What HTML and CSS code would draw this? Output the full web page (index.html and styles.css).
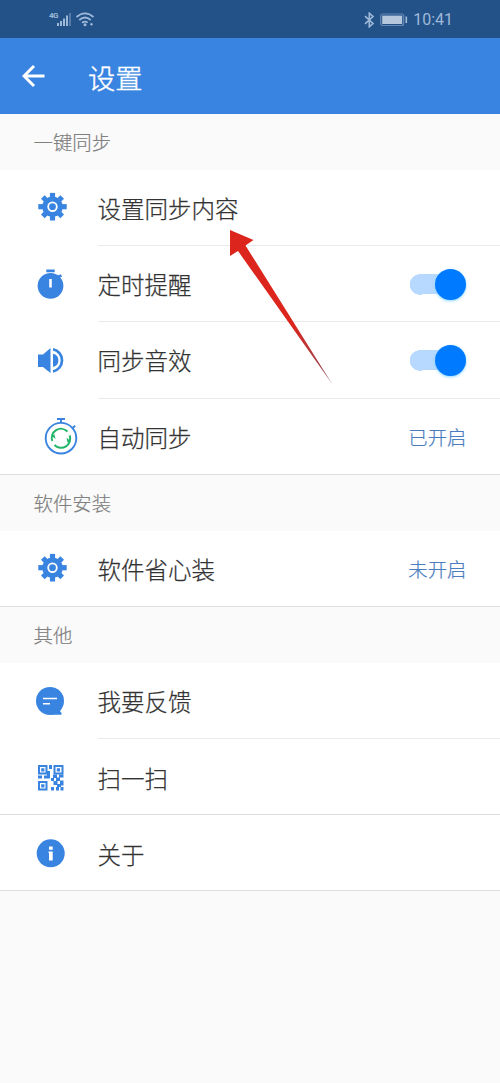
FILE: index.html
```html
<!DOCTYPE html>
<html lang="zh-CN">
<head>
<meta charset="utf-8">
<title>设置</title>
<link rel="stylesheet" href="styles.css">
</head>
<body>
<svg class="defs" width="0" height="0">
  <symbol id="gear" viewBox="0 0 98 76">
    <g fill="#3984e0">
      <circle cx="52.5" cy="36.7" r="10.3"/>
      <rect x="49.9" y="22.9" width="5.2" height="27.6"/><rect x="38.3" y="34.1" width="28.4" height="5.2"/>
      <g transform="rotate(45 52.5 36.7)"><rect x="49.9" y="23" width="5.2" height="27.4"/><rect x="38.8" y="34.1" width="27.4" height="5.2"/></g>
    </g>
    <circle cx="52.5" cy="36.7" r="4.3" fill="none" stroke="#fff" stroke-width="1.8"/>
  </symbol>
</svg>
<main class="screen">
  <div class="status">
    <svg class="signal" width="50" height="20" viewBox="0 0 50 20">
      <text x="1" y="8" class="net">4G</text>
      <g fill="#9fb9d8"><rect x="9" y="13" width="2" height="3"/><rect x="12" y="11" width="2" height="5"/><rect x="15" y="8.5" width="2" height="7.5"/><rect x="18" y="5.5" width="2" height="10.5"/><rect x="21" y="3" width="2" height="13" opacity=".4"/></g>
      <g fill="none" stroke="#9fb9d8" stroke-width="1.7"><path d="M28.5 7Q37 -.4 45.5 7M31.3 10Q37 5 42.7 10M34 12.7Q37 10.5 39.7 12.7"/></g>
      <circle cx="37" cy="14.7" r="1.5" fill="#9fb9d8"/><circle cx="43.5" cy="14.3" r="1.2" fill="#9fb9d8"/>
    </svg>
    <div class="status-right">
      <svg width="11" height="16" viewBox="0 0 11 16"><path d="M1 4.2L9 11.5L5.3 14.8V1.2L9 4.5L1 11.8" fill="none" stroke="#9fb9d8" stroke-width="1.6"/></svg>
      <svg class="battery" width="28" height="14" viewBox="0 0 28 14"><rect x=".7" y="1" width="23" height="11.5" rx="2" fill="none" stroke="#6588b3" stroke-width="1.2"/><rect x="2.2" y="2.6" width="20" height="8.4" fill="#b4c7dd"/><rect x="25.5" y="3.5" width="1.6" height="6.5" fill="#9fb9d8"/></svg>
      <span class="clock">10:41</span>
    </div>
  </div>
  <header class="bar">
    <svg width="24" height="24" viewBox="0 0 24 24"><path d="M22.5 12H2.5M12 2L2 12L12 22" fill="none" stroke="#fff" stroke-width="3"/></svg>
    <h1>设置</h1>
  </header>

  <h2>一键同步</h2>
  <section>
    <div class="row"><svg class="icon" viewBox="0 0 98 76"><use href="#gear"/></svg><div class="cell"><span>设置同步内容</span></div></div>
    <div class="row"><svg class="icon" viewBox="0 0 98 76"><circle cx="50.5" cy="39.8" r="12.9" fill="#3984e0"/><path d="M46.3 24.8H54.7M57.5 31L61.5 29.5" stroke="#3984e0" stroke-width="2.8"/><path d="M50.5 33V41.5" stroke="#fff" stroke-width="2.6"/></svg><div class="cell"><span>定时提醒</span><i class="switch"></i></div></div>
    <div class="row"><svg class="icon" viewBox="0 0 98 76"><path d="M38 32.5H43L50.5 26V51L43 45H38Z" fill="#3984e0"/><path d="M53 31.7A6.8 6.8 0 0 1 53 45Z" fill="#3984e0"/><path d="M53 27.2A11.4 11.4 0 0 1 53 49.5" fill="none" stroke="#3984e0" stroke-width="2.7"/></svg><div class="cell"><span>同步音效</span><i class="switch"></i></div></div>
    <div class="row last"><svg class="icon" viewBox="0 0 98 76"><g fill="none" stroke="#3984e0" stroke-width="1.9"><circle cx="61" cy="39.2" r="15.3"/><path d="M57 20H65M61 20V24M72 29.5L75.2 26.8"/></g><g fill="none" stroke="#20b568" stroke-width="2"><path d="M52.3 42A9.2 9.2 0 0 1 67.500 32.500M69.700 36.400A9.2 9.2 0 0 1 54.500 46"/></g><path d="M51.3 36.500L54.500 35.500L55.500 40ZM70.7 42.500L67.500 43.500L66.500 38.500Z" fill="#20b568"/></svg><div class="cell"><span>自动同步</span><em>已开启</em></div></div>
  </section>

  <h2>软件安装</h2>
  <section>
    <div class="row last"><svg class="icon" viewBox="0 0 98 76"><use href="#gear"/></svg><div class="cell"><span>软件省心装</span><em>未开启</em></div></div>
  </section>

  <h2>其他</h2>
  <section>
    <div class="row"><svg class="icon" viewBox="0 0 98 76"><circle cx="50" cy="38" r="14" fill="#3984e0"/><path d="M52 51.8H61.5V50L57 44Z" fill="#3984e0"/><path d="M43 35.5H57M43 40.7H50" stroke="#fff" stroke-width="1.6"/></svg><div class="cell"><span>我要反馈</span></div></div>
    <div class="row last"><svg class="icon" viewBox="0 0 98 76"><g fill="none" stroke="#3984e0" stroke-width="2"><rect x="39" y="27" width="7.5" height="7.5"/><rect x="54.5" y="27" width="8" height="7.5"/><rect x="39" y="43" width="7.5" height="7.500"/></g><g fill="#3984e0"><path d="M41.2 29.2h3.2v3.2h-3.2zM56.8 29.2h3.2v3.2h-3.2zM41.2 45.2h3.2v3.2h-3.2zM49 26h3v4h-3zM47 32h3v6h-3zM38 36.500h4v3h-4zM44 36.500h6v3h-6zM53 35.500h4v3.500h-4zM59 35.500h4.500v3h-4.500zM51 39h3v3h-3zM56 38.500h4v3.500h-4zM60 41.500h3.500v5h-3.500zM53.500 42h4v4h-4zM57 45h4v3h-4zM51 48h3v3.500h-3zM56 48h3v3.500h-3zM60.500 48h3v3.500h-3z"/></g></svg><div class="cell"><span>扫一扫</span></div></div>
    <div class="row last"><svg class="icon" viewBox="0 0 98 76"><circle cx="50.7" cy="38.3" r="14" fill="#3984e0"/><path d="M49 31.5H52.7V34.7H49ZM48.5 36.5H52.7V45.5H49V38H48.5Z" fill="#fff"/></svg><div class="cell"><span>关于</span></div></div>
  </section>
  <svg class="pointer" width="106" height="158" viewBox="0 0 106 158">
    <defs><linearGradient id="tail" gradientUnits="userSpaceOnUse" x1="20" y1="20" x2="104" y2="155"><stop offset=".55" stop-color="#dc251c"/><stop offset="1" stop-color="#8c5060"/></linearGradient></defs>
    <path d="M2 1L25.5 11L17.5 16.5L104.5 155.5L10 22L2 27Z" fill="url(#tail)"/>
  </svg>
</main>
</body>
</html>
```
FILE: styles.css
```css
* { box-sizing: border-box; }
body { margin: 0; background: #fafafa; color: #333; font-family: "Noto Sans CJK SC", sans-serif; font-weight: 300; }
.defs { position: absolute; }
.screen { position: relative; width: 500px; height: 1083px; overflow: hidden; }
.status { height: 38px; background: #235289; display: flex; justify-content: space-between; padding: 10px 47px 0 48px; }
.net { font: bold 8px Roboto, sans-serif; fill: #9fb9d8; letter-spacing: -.5px; }
.status-right { display: flex; align-items: center; height: 19px; }
.battery { margin: 0 5px; }
.clock { font: 16px/19px Roboto, sans-serif; color: #9fb9d8; }
.bar { height: 76px; background: #3984e0; display: flex; align-items: center; padding-left: 22px; }
h1 { margin: 1px 0 0 42px; font-size: 27.3px; line-height: 40px; font-weight: 300; color: #fff; -webkit-text-stroke: .4px #fff; }
h2 { margin: 0; height: 56.1px; padding-left: 33.5px; font-size: 19.4px; line-height: 56px; font-weight: 300; color: #808080; -webkit-text-stroke: .2px #808080; }
section { background: #fff; }
.row { height: 76.15px; display: flex; }
.icon { width: 98px; height: 76px; flex: none; }
.cell { flex: 1; display: flex; align-items: center; justify-content: space-between; padding: 1px 34px 0 0; border-bottom: 1px solid #e9e9e9; font-size: 23.5px; line-height: 34px; }
.cell span { margin-left: -.5px; -webkit-text-stroke: .25px #333; }
.row.last { border-bottom: 1px solid #dedede; }
.row.last .cell { border-bottom: 0; padding-top: 2px; }
em { font-style: normal; font-size: 19.4px; margin-right: -.5px; color: #4b7dbe; -webkit-text-stroke: .2px #4b7dbe; }
.switch { width: 56px; height: 31px; display: flex; justify-content: flex-end; background: radial-gradient(circle at 10px 50%, #b7d8ff 10px, transparent 10.5px), linear-gradient(#b7d8ff, #b7d8ff) 10px 50% / 30px 20px no-repeat; }
.switch::after { content: ""; width: 31px; height: 31px; border-radius: 50%; background: #007aff; box-shadow: 0 1px 3px #87d4ff; }
.pointer { position: absolute; left: 228px; top: 229px; }
```
